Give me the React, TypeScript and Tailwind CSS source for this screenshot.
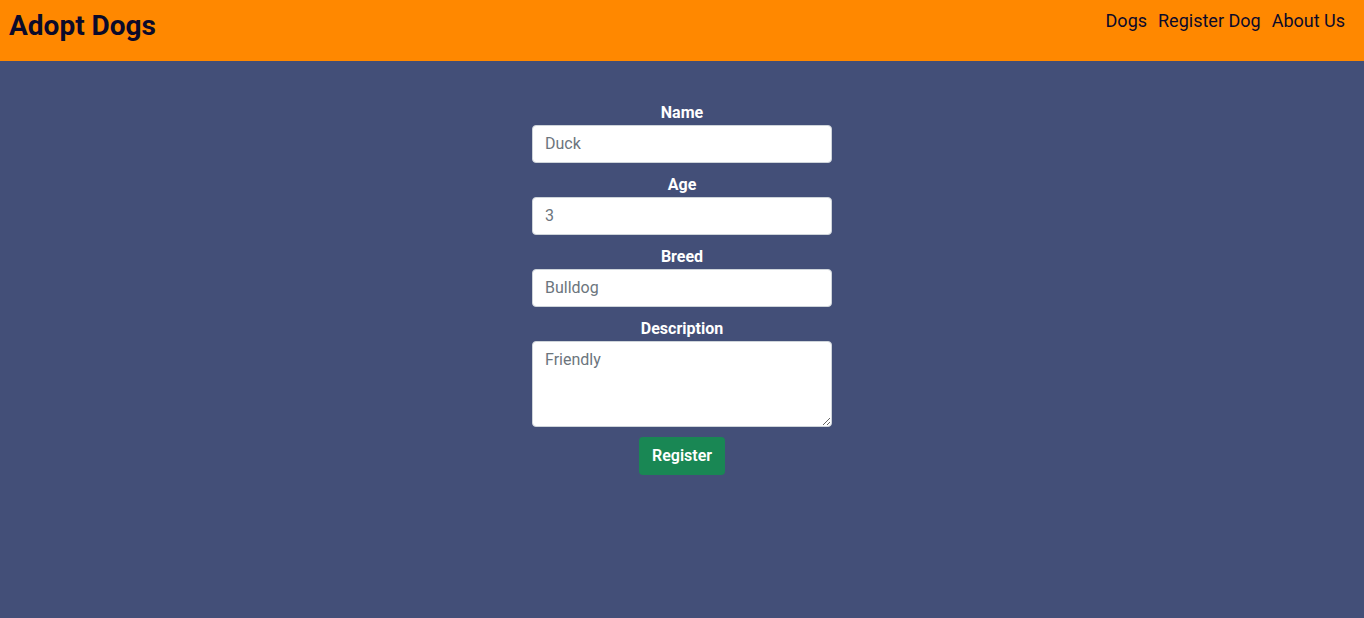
export default function App() {
  return (
    <div
      className="min-h-[618px] bg-[#434f78] flex flex-col"
      style={{ fontFamily: "Roboto, 'Liberation Sans', sans-serif" }}
    >
      <header className="h-[61px] bg-[#ff8800] flex justify-between items-start px-[9px]">
        <h1 className="text-[28px] font-bold text-[#0b0a2a] leading-none mt-[12px]">Adopt Dogs</h1>
        <nav className="flex gap-[11px] mt-[10px] mr-[10px] text-[18px] text-[#0b0a2a] leading-[22px]">
          <a href="#">Dogs</a>
          <a href="#">Register Dog</a>
          <a href="#">About Us</a>
        </nav>
      </header>

      <form className="w-[300px] mx-auto mt-[40px] flex flex-col items-center text-white">
        <label className="text-[16px] font-bold leading-[24px]">Name</label>
        <input
          className="w-full h-[38px] bg-white rounded-[4px] border border-[#ced4da] px-[12px] pb-[2px] text-[16px] text-[#6c757d] outline-none mb-[10px]"
          defaultValue="Duck"
        />
        <label className="text-[16px] font-bold leading-[24px]">Age</label>
        <input
          className="w-full h-[38px] bg-white rounded-[4px] border border-[#ced4da] px-[12px] pb-[2px] text-[16px] text-[#6c757d] outline-none mb-[10px]"
          defaultValue="3"
        />
        <label className="text-[16px] font-bold leading-[24px]">Breed</label>
        <input
          className="w-full h-[38px] bg-white rounded-[4px] border border-[#ced4da] px-[12px] pb-[2px] text-[16px] text-[#6c757d] outline-none mb-[10px]"
          defaultValue="Bulldog"
        />
        <label className="text-[16px] font-bold leading-[24px]">Description</label>
        <textarea
          className="w-full h-[86px] bg-white rounded-[4px] border border-[#ced4da] px-[12px] py-[6px] text-[16px] leading-[24px] text-[#6c757d] outline-none mb-[10px]"
          defaultValue="Friendly"
        />
        <button
          type="button"
          className="h-[38px] px-[13px] bg-[#198754] rounded-[4px] text-white text-[16px] font-semibold"
        >
          Register
        </button>
      </form>
    </div>
  );
}
